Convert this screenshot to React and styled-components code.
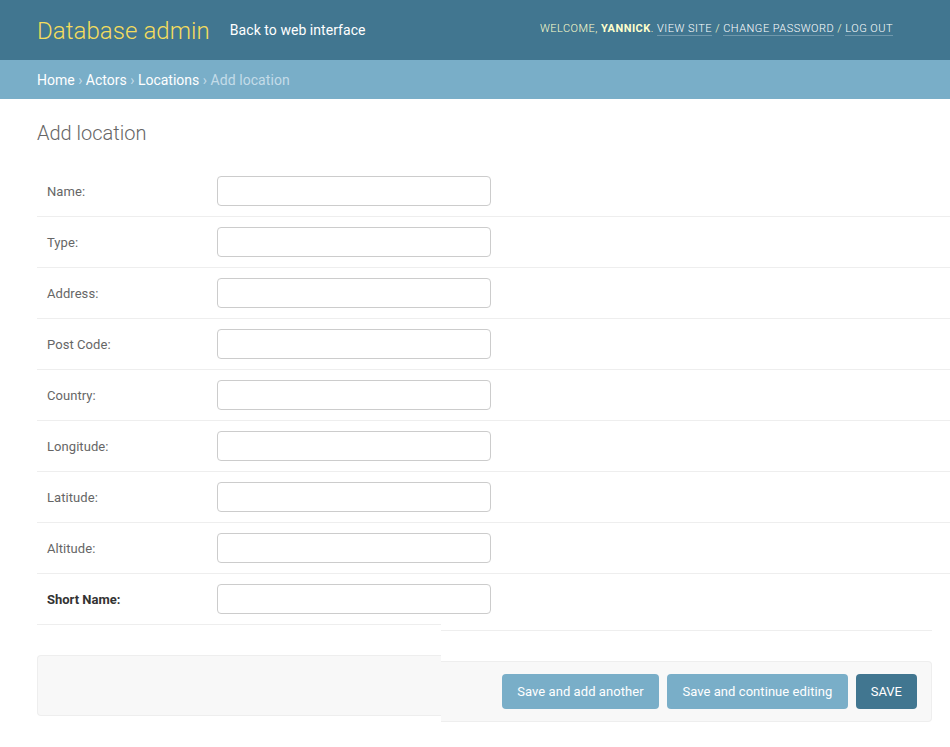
import styled, { createGlobalStyle } from "styled-components";

const GlobalStyle = createGlobalStyle`
    html, body {
        margin: 0;
        padding: 0;
        background: #fff;
        color: #333;
        font-family: Roboto, "Lucida Grande", Verdana, Arial, sans-serif;
        font-size: 14px;
    }
    * {
        box-sizing: border-box;
    }
`;

const Header = styled.header`
    display: flex;
    justify-content: space-between;
    align-items: center;
    height: 60px;
    padding: 0 57px 0 37px;
    background: #417690;
    color: #ffc;
`;

const Branding = styled.div`
    display: flex;
    align-items: center;
    gap: 20px;
`;

const Title = styled.h1`
    margin: 2px 0 0;
    font-size: 24px;
    font-weight: 300;
    letter-spacing: 0.07px;
    color: #f5dd5d;
`;

const BackLink = styled.a`
    color: #fff;
    font-size: 14px;
    letter-spacing: 0.05px;
    text-decoration: none;
`;

const UserTools = styled.div`
    font-size: 11px;
    font-weight: 300;
    letter-spacing: 0.48px;
    text-transform: uppercase;
    margin-top: -4px;

    strong {
        font-weight: 700;
    }
`;

const UserLink = styled.a`
    color: #fff;
    text-decoration: none;
    border-bottom: 1px solid rgba(255, 255, 255, 0.25);
`;

const Breadcrumbs = styled.nav`
    display: flex;
    align-items: center;
    height: 39px;
    padding: 0 37px;
    background: #79aec8;
    color: #c4dce8;
    font-size: 14px;
    white-space: pre;
`;

const Crumb = styled.a`
    color: #fff;
    text-decoration: none;
`;

const CurrentCrumb = styled.span`
    letter-spacing: 0.08px;
`;

const Heading = styled.h1`
    margin: 0;
    padding: 22px 0 21px 37px;
    font-size: 20px;
    line-height: 24px;
    font-weight: 300;
    color: #666;
`;

const Fields = styled.div`
    padding-left: 37px;
`;

const FormRow = styled.div`
    display: flex;
    align-items: center;
    height: ${(props) => (props.$last ? "50px" : "51px")};
    padding: 10px;
    border-bottom: ${(props) => (props.$last ? "none" : "1px solid #eee")};
`;

const Label = styled.label`
    width: 170px;
    font-size: 13px;
    letter-spacing: ${(props) => (props.$required ? "0" : "0.06px")};
    color: ${(props) => (props.$required ? "#333" : "#666")};
    font-weight: ${(props) => (props.$required ? 700 : 400)};
`;

const TextInput = styled.input`
    width: 274px;
    height: 30px;
    padding: 5px 6px;
    background: #fff;
    border: 1px solid #ccc;
    border-radius: 4px;
`;

const Footer = styled.div`
    display: flex;
`;

const LeftSlice = styled.div`
    flex: 0 0 441px;
    height: 92px;
    padding-left: 37px;
`;

const RightSlice = styled.div`
    flex: 1;
    height: 92px;
    margin-top: 6px;
    padding-right: 18px;
`;

const Rule = styled.div`
    height: 1px;
    margin-bottom: 30px;
    background: #eee;
`;

const SubmitBar = styled.div`
    display: flex;
    justify-content: flex-end;
    gap: 8px;
    height: 61px;
    padding: 12px 14px;
    background: #f8f8f8;
    border: 1px solid #eee;
    border-radius: ${(props) => (props.$side === "left" ? "4px 0 0 4px" : "0 4px 4px 0")};
    border-width: ${(props) => (props.$side === "left" ? "1px 0 1px 1px" : "1px 1px 1px 0")};
`;

const Button = styled.button`
    height: 35px;
    padding: ${(props) => (props.$primary ? "0 15px" : "0 15.4px")};
    border: none;
    border-radius: 4px;
    background: ${(props) => (props.$primary ? "#417690" : "#79aec8")};
    color: #fff;
    font-family: inherit;
    font-size: 13px;
    letter-spacing: ${(props) => (props.$primary ? "0" : "0.06px")};
    text-transform: ${(props) => (props.$primary ? "uppercase" : "none")};
`;

const fields = [
    "Name",
    "Type",
    "Address",
    "Post Code",
    "Country",
    "Longitude",
    "Latitude",
    "Altitude",
];

const App = () => {
    return (
        <>
            <GlobalStyle />
            <Header>
                <Branding>
                    <Title>Database admin</Title>
                    <BackLink href="#">Back to web interface</BackLink>
                </Branding>
                <UserTools>
                    Welcome, <strong>Yannick</strong>.{" "}
                    <UserLink href="#">View site</UserLink> /{" "}
                    <UserLink href="#">Change password</UserLink> /{" "}
                    <UserLink href="#">Log out</UserLink>
                </UserTools>
            </Header>
            <Breadcrumbs>
                <Crumb href="#">Home</Crumb> › <Crumb href="#">Actors</Crumb> ›{" "}
                <Crumb href="#">Locations</Crumb> › <CurrentCrumb>Add location</CurrentCrumb>
            </Breadcrumbs>
            <Heading>Add location</Heading>
            <Fields>
                {fields.map((name) => (
                    <FormRow key={name}>
                        <Label>{name}:</Label>
                        <TextInput type="text" />
                    </FormRow>
                ))}
                <FormRow $last>
                    <Label $required>Short Name:</Label>
                    <TextInput type="text" />
                </FormRow>
            </Fields>
            <Footer>
                <LeftSlice>
                    <Rule />
                    <SubmitBar $side="left" />
                </LeftSlice>
                <RightSlice>
                    <Rule />
                    <SubmitBar $side="right">
                        <Button>Save and add another</Button>
                        <Button>Save and continue editing</Button>
                        <Button $primary>Save</Button>
                    </SubmitBar>
                </RightSlice>
            </Footer>
        </>
    );
};

export default App;
